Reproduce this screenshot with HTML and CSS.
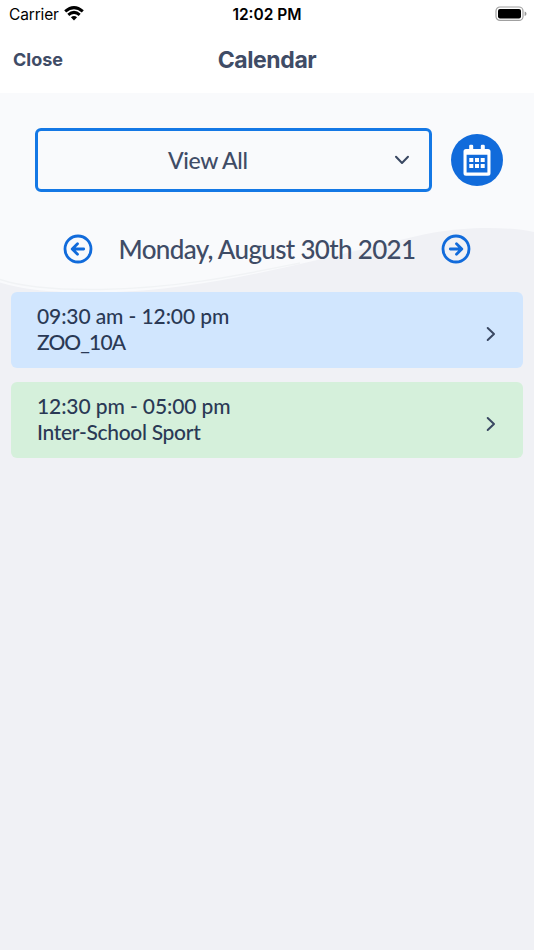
FILE: index.html
```html
<!DOCTYPE html>
<html lang="en">
<head>
<meta charset="utf-8">
<title>Calendar</title>
<link rel="stylesheet" href="styles.css">
</head>
<body>
<div class="status">
  <div class="carrier"><span>Carrier</span>
    <svg class="wifi" width="20" height="15" viewBox="0 0 20 15"><g fill="none" stroke="#000" stroke-width="3"><path d="M1.2 5.4Q10-2.2 18.8 5.4"/><path d="M4.3 8.8Q10 3.9 15.7 8.8"/></g><path d="M6.9 11.2Q10 8.7 13.1 11.2L10 14.4Z"/></svg>
  </div>
  <div class="time">12:02 PM</div>
  <svg class="battery" width="32" height="16" viewBox="0 0 32 16"><rect x="1" y="1" width="27" height="13.4" rx="4" fill="none" stroke="#a0a0a0" stroke-width="1.2"/><rect x="3" y="3" width="23" height="9.6" rx="2"/><path d="M29.6 5.4Q31.5 5.9 31.5 7.7T29.6 10Z" fill="#999"/></svg>
</div>
<header class="nav">
  <a class="close">Close</a>
  <h1 class="title">Calendar</h1>
</header>
<main class="content">
  <svg class="wave" width="534" height="210" viewBox="0 0 534 210"><path fill="#f9fafc" d="M0 0H534V139C505 133 465 134 434 139.5C400 146 350 160 300 171C245 183 180 198 100 199.5C55 200 25 197 0 189.500Z"/><path fill="none" stroke="#f1f3f5" stroke-width="1.4" d="M0 186.500C25 195 60 197 100 196.500C180 195 240 182 300 170"/></svg>
  <div class="filter">
    <div class="select"><span class="label view">View All</span>
      <svg class="chevron" width="16" height="10" viewBox="0 0 16 10"><path d="M2 1.7L8 8L14 1.7"/></svg>
    </div>
    <div class="calbtn">
      <svg width="28" height="33" viewBox="0 0 28 33"><path fill="#fff" fill-rule="evenodd" d="M6.2 5V2Q6.2.8 7.4.8H9Q10.2.8 10.2 2V5H17.8V2Q17.8.8 19 .8H20.6Q21.8.8 21.8 2V5H25Q27.5 5 27.5 7.500V29.2Q27.5 31.7 25 31.7H3Q.5 31.7.5 29.2V7.500Q.5 5 3 5ZM3.6 10.8V28.4H24.4V10.8Z"/><path fill="#fff" d="M6.3 14H10.3V18H6.3ZM12 14H16V18H12ZM17.7 14H21.7V18H17.7ZM6.3 20H10.3V24H6.3ZM12 20H16V24H12ZM17.7 20H21.7V24H17.7Z"/></svg>
    </div>
  </div>
  <div class="day">
    <svg class="arrow" width="30" height="30" viewBox="0 0 30 30"><circle cx="15" cy="15" r="13"/><path d="M20.7 15H9.5M14.5 9.7L9.2 15L14.5 20.3"/></svg>
    <h2 class="label date">Monday, August 30th 2021</h2>
    <svg class="arrow" width="30" height="30" viewBox="0 0 30 30"><circle cx="15" cy="15" r="13"/><path d="M9.3 15H20.5M15.5 9.7L20.8 15L15.5 20.3"/></svg>
  </div>
  <div class="events">
    <div class="event blue">
      <div class="info"><span class="label t1">09:30 am - 12:00 pm</span><span class="label t2">ZOO_10A</span></div>
      <svg class="chevron" width="10" height="16" viewBox="0 0 10 16"><path d="M1.7 2L8 8L1.7 14"/></svg>
    </div>
    <div class="event green">
      <div class="info"><span class="label t3">12:30 pm - 05:00 pm</span><span class="label t4">Inter-School Sport</span></div>
      <svg class="chevron" width="10" height="16" viewBox="0 0 10 16"><path d="M1.7 2L8 8L1.7 14"/></svg>
    </div>
  </div>
</main>
</body>
</html>
```
FILE: styles.css
```css
* { box-sizing: border-box; }
body { margin: 0; min-height: 950px; background: #f0f1f5; font-family: Inter, sans-serif; color: #3f4c66; }
svg { display: block; flex: none; }
.status { height: 28px; background: #fff; color: #000; display: grid; grid-template-columns: 1fr auto 1fr; align-items: center; padding: 0 7px 0 9px; font-size: 15.5px; }
.carrier { display: flex; align-items: center; gap: 5px; letter-spacing: -0.15px; }
.wifi { margin-top: -2px; }
.time { font-weight: 600; font-size: 15.5px; margin-right: 2px; }
.battery { justify-self: end; margin-top: -1px; }
.nav { height: 65px; background: #fff; display: grid; grid-template-columns: 1fr auto 1fr; align-items: center; padding: 0 13px 2px; }
.close { font-size: 18px; font-weight: 700; }
.title { margin: 0; font-size: 23px; font-weight: 700; letter-spacing: -0.4px; }
.content { position: relative; }
.wave { position: absolute; inset: 0 auto auto 0; z-index: -1; }
.label { font-family: Lato, sans-serif; font-weight: 500; white-space: nowrap; }
.filter { display: flex; align-items: center; gap: 19px; padding: 35px 31px 0 35px; }
.select { width: 397px; height: 64px; border: 3px solid #1478e5; border-radius: 6px; display: flex; align-items: center; justify-content: space-between; padding: 0 19px 0 130px; }
.view { font-size: 23px; letter-spacing: -0.4px; }
.chevron path { fill: none; stroke: #3a4862; stroke-width: 2; stroke-linecap: round; stroke-linejoin: round; }
.calbtn { width: 52px; height: 52px; border-radius: 50%; background: #116bdb; display: flex; align-items: center; justify-content: center; }
.day { height: 100px; display: flex; align-items: center; justify-content: space-between; padding: 14px 63px 0; }
.arrow { fill: none; stroke: #116bdb; stroke-width: 2.8; stroke-linecap: round; stroke-linejoin: round; }
.date { margin: 0; font-size: 26px; letter-spacing: -0.67px; }
.events { display: flex; flex-direction: column; gap: 14px; padding: 0 11px; }
.event { height: 76px; border-radius: 6px; display: flex; align-items: center; justify-content: space-between; padding: 0 27px 0 26px; color: #2a3955; }
.event .chevron { margin-top: 8px; }
.info { display: flex; flex-direction: column; font-size: 21px; line-height: 26px; padding-bottom: 2px; }
.t1, .t3 { letter-spacing: -0.1px; }
.t2 { letter-spacing: -0.9px; }
.t4 { letter-spacing: -0.3px; }
.blue { background: #d1e6fe; }
.green { background: #d5f0db; }
```
